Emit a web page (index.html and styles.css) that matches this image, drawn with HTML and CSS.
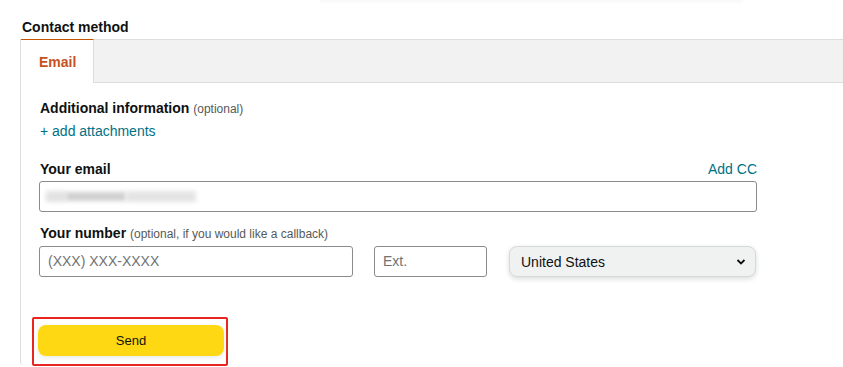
FILE: index.html
```html
<!DOCTYPE html>
<html lang="en">
<head>
    <meta charset="UTF-8">
    <title>Contact method</title>
    <link rel="stylesheet" href="styles.css">
</head>
<body>
    <div class="top-shade"></div>
    <h2 class="section-title">Contact method</h2>
    <div class="contact-box">
        <div class="tabs">
            <div class="tab active">Email</div>
            <div class="tab-fill"></div>
        </div>
        <div class="panel">
            <div class="label">Additional information <span class="hint">(optional)</span></div>
            <a class="link" href="#">+ add attachments</a>

            <div class="label-row">
                <span class="label">Your email</span>
                <a class="link" href="#">Add CC</a>
            </div>
            <div class="field email-field">
                <span class="blur blur-a"></span>
                <span class="blur blur-b"></span>
                <span class="blur blur-c"></span>
            </div>

            <div class="label number-label">Your number <span class="hint">(optional, if you would like a callback)</span></div>
            <div class="phone-row">
                <div class="field phone">(XXX) XXX-XXXX</div>
                <div class="field ext">Ext.</div>
                <div class="select">
                    United States
                    <svg width="12" height="8" viewBox="0 0 12 8"><path d="M2.5 2 L6 5.5 L9.5 2" fill="none" stroke="#0f1111" stroke-width="1.8"/></svg>
                </div>
            </div>

            <div class="send-wrap">
                <button class="send-btn">Send</button>
            </div>
        </div>
    </div>
</body>
</html>
```

FILE: styles.css
```css
body {
    margin: 0;
    font-family: 'Liberation Sans', Arial, sans-serif;
    color: #0f1111;
    background: #fff;
    width: 843px;
    height: 367px;
    overflow: hidden;
}

.top-shade {
    height: 4px;
    margin: 0 100px 0 320px;
    background: linear-gradient(#f8f8f8, #fff);
}

.section-title {
    margin: 13px 0 0 22px;
    font-size: 14px;
    font-weight: bold;
    line-height: 20px;
}

.contact-box {
    margin: 2px 0 0 20px;
    border-left: 1px solid #ddd;
    border-bottom-left-radius: 4px;
    height: 326px;
}

.tabs {
    display: flex;
    height: 44px;
}

.tab {
    width: 73px;
    box-sizing: border-box;
    border-top: 1px solid #c45500;
    border-right: 1px solid #ddd;
    font-size: 14px;
    font-weight: bold;
    color: #c7511f;
    padding: 14px 0 0 18px;
}

.tab-fill {
    flex: 1;
    background: #f2f2f2;
    border-top: 1px solid #ddd;
    border-bottom: 1px solid #ddd;
}

.panel {
    padding: 15px 0 0 18px;
    width: 718px;
}

.label {
    font-size: 14px;
    font-weight: bold;
    line-height: 20px;
    padding-left: 1px;
}

.hint {
    font-size: 12px;
    font-weight: normal;
    color: #565959;
}

.link {
    display: block;
    font-size: 14px;
    line-height: 20px;
    margin-top: 2px;
    padding-left: 1px;
    color: #007185;
    text-decoration: none;
}

.label-row {
    display: flex;
    justify-content: space-between;
    margin-top: 18px;
}

.label-row .label {
    padding-left: 1px;
}

.label-row .link {
    margin-top: 0;
}

.field {
    box-sizing: border-box;
    height: 31px;
    border: 1px solid #888c8c;
    border-radius: 3px;
    font-size: 14px;
    line-height: 29px;
    padding: 0 8px;
    color: #6f7373;
}

.email-field {
    margin-top: 2px;
    display: flex;
    align-items: center;
    padding-left: 6px;
}

.blur {
    display: inline-block;
    height: 11px;
    background: #d6d6d6;
    filter: blur(2px);
}

.blur-a {
    width: 20px;
    background: #e2e2e2;
}

.blur-b {
    width: 60px;
    height: 9px;
    background: #d0d0d0;
}

.blur-c {
    width: 70px;
    background: #e4e4e4;
}

.number-label {
    margin-top: 11px;
}

.phone-row {
    display: flex;
    margin-top: 2px;
}

.phone {
    width: 314px;
}

.ext {
    width: 113px;
    margin-left: 21px;
}

.select {
    box-sizing: border-box;
    width: 247px;
    height: 31px;
    margin-left: 22px;
    background: #f0f2f2;
    border: 1px solid #d5d9d9;
    border-radius: 8px;
    box-shadow: 0 2px 5px rgba(15, 17, 17, 0.15);
    font-size: 14px;
    padding: 0 8px 0 11px;
    display: flex;
    align-items: center;
    justify-content: space-between;
}

.send-wrap {
    margin: 40px 0 0 -7px;
    width: 196px;
    height: 49px;
    box-sizing: border-box;
    border: 2px solid #e8251f;
    border-radius: 2px;
    padding: 6px 0 0 4px;
}

.send-btn {
    width: 186px;
    height: 31px;
    background: #ffd814;
    border: none;
    border-radius: 8px;
    box-shadow: 0 2px 5px rgba(213, 217, 217, 0.5);
    font-family: 'Liberation Sans', Arial, sans-serif;
    font-size: 13px;
    color: #0f1111;
}
```
